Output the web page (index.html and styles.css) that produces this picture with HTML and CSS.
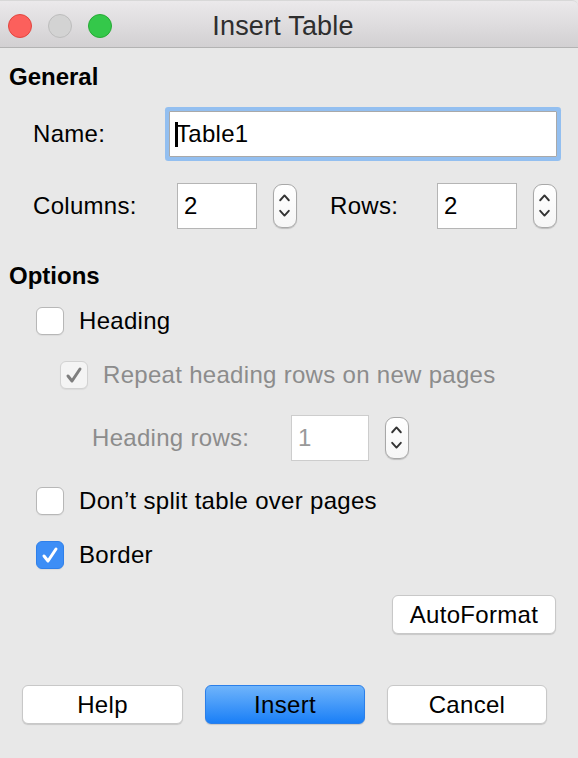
FILE: index.html
```html
<!DOCTYPE html>
<html lang="en">
<head>
    <meta charset="UTF-8">
    <title>Insert Table</title>
    <link rel="stylesheet" href="styles.css">
</head>
<body>
<div class="window">
    <div class="titlebar">
        <div class="lights">
            <span class="light close"></span>
            <span class="light mini"></span>
            <span class="light zoom"></span>
        </div>
        <div class="title">Insert Table</div>
    </div>

    <div class="group-title first">General</div>
    <div class="row name-row">
        <label class="label name-label">Name:</label>
        <div class="text-input focus"><span class="caret"></span>Table1</div>
    </div>
    <div class="row size-row">
        <label class="label cols-label">Columns:</label>
        <div class="num-input">2</div>
        <div class="spin">
            <svg width="24" height="44" viewBox="0 0 24 44"><polyline points="7.5,16 12,11 16.5,16"/><polyline points="7.5,27 12,32 16.5,27"/></svg>
        </div>
        <label class="label rows-label">Rows:</label>
        <div class="num-input">2</div>
        <div class="spin">
            <svg width="24" height="44" viewBox="0 0 24 44"><polyline points="7.5,16 12,11 16.5,16"/><polyline points="7.5,27 12,32 16.5,27"/></svg>
        </div>
    </div>

    <div class="group-title options">Options</div>
    <div class="check-row first-check">
        <span class="box"></span>Heading
    </div>
    <div class="check-row sub disabled">
        <span class="box">
            <svg width="26" height="26" viewBox="0 0 26 26"><polyline points="7,14 11,19 19,7"/></svg>
        </span>Repeat heading rows on new pages
    </div>
    <div class="row hrows-row disabled">
        <label class="label hrows-label">Heading rows:</label>
        <div class="num-input hrows-input">1</div>
        <div class="spin small">
            <svg width="24" height="42" viewBox="0 0 24 42"><polyline points="7.5,15 12,10 16.5,15"/><polyline points="7.5,26 12,31 16.5,26"/></svg>
        </div>
    </div>
    <div class="check-row">
        <span class="box"></span>Don’t split table over pages
    </div>
    <div class="check-row">
        <span class="box checked">
            <svg width="26" height="26" viewBox="0 0 26 26"><polyline points="7,14 11,19 19,7"/></svg>
        </span>Border
    </div>

    <div class="auto-row">
        <div class="btn auto">AutoFormat</div>
    </div>
    <div class="buttons">
        <div class="btn">Help</div>
        <div class="btn primary">Insert</div>
        <div class="btn">Cancel</div>
    </div>
</div>
</body>
</html>
```

FILE: styles.css
```css
*{
    box-sizing: border-box;
}
body{
    margin: 0;
    background: #e8e8e8;
    font-family: "Liberation Sans", Arial, sans-serif;
    font-size: 24px;
    line-height: 28px;
    letter-spacing: 0.3px;
    color: #000;
}
.window{
    width: 578px;
    height: 758px;
    overflow: hidden;
}
/* 标题栏 */
.titlebar{
    height: 48px;
    display: flex;
    align-items: center;
    padding: 4px 0 0 8px;
    background: linear-gradient(#ebe9eb, #d2d0d2);
    border-top: 1px solid #d8d8d8;
    border-bottom: 1px solid #b3b3b3;
    border-top-right-radius: 6px;
}
.lights{
    display: flex;
    gap: 16px;
}
.light{
    width: 24px;
    height: 24px;
    border-radius: 50%;
}
.close{
    background: #fc605c;
    border: 1px solid #e2463f;
}
.mini{
    background: #d3d3d3;
    border: 1px solid #bdbdbd;
}
.zoom{
    background: #34c84a;
    border: 1px solid #27aa35;
}
.title{
    flex: 1;
    text-align: center;
    padding-right: 124px;
    font-size: 27px;
    letter-spacing: 0.2px;
    color: #2e2e2e;
}
/* 分组标题 */
.group-title{
    height: 28px;
    margin-left: 9px;
    font-weight: bold;
    letter-spacing: 0;
}
.group-title.first{
    margin-top: 15px;
}
.group-title.options{
    margin-top: 33px;
}
.row{
    display: flex;
    align-items: center;
    height: 46px;
    padding-left: 33px;
}
.name-row{
    margin-top: 20px;
}
.size-row{
    margin-top: 26px;
}
.name-label{
    width: 136px;
}
.cols-label{
    width: 144px;
}
.rows-label{
    width: 107px;
    margin-left: 33px;
}
.text-input{
    width: 388px;
    height: 46px;
    background: #fff;
    border: 1px solid #a9a9a9;
    border-radius: 1px;
    padding-left: 5px;
    line-height: 44px;
}
.text-input.focus{
    box-shadow: 0 0 0 4px #93bff0;
}
.caret{
    display: inline-block;
    width: 3px;
    height: 25px;
    background: #000;
    vertical-align: -5px;
    margin-right: -2px;
}
.num-input{
    width: 80px;
    height: 46px;
    background: #fff;
    border: 1px solid #b5b5b5;
    padding-left: 6px;
    line-height: 44px;
}
.spin{
    width: 24px;
    height: 44px;
    margin-left: 16px;
    background: linear-gradient(#fff, #f6f6f6);
    border: 1px solid #a8a8a8;
    border-radius: 9px;
    box-shadow: 0 1px 1px rgba(0,0,0,.18);
    display: flex;
}
.spin svg{
    margin-left: -1px;
    margin-top: -1px;
}
.spin polyline{
    fill: none;
    stroke: #333;
    stroke-width: 2;
    stroke-linecap: round;
    stroke-linejoin: round;
}
.spin.small{
    height: 42px;
}
/* 复选框 */
.check-row{
    display: flex;
    align-items: center;
    height: 28px;
    margin-top: 26px;
    padding-left: 36px;
}
.check-row.first-check{
    margin-top: 17px;
}
.check-row.sub{
    padding-left: 60px;
}
.box{
    width: 28px;
    height: 28px;
    margin-right: 15px;
    background: #fff;
    border: 1px solid #b7b7b7;
    border-radius: 6px;
    box-shadow: 0 1px 1px rgba(0,0,0,.06);
    display: flex;
}
.box polyline{
    fill: none;
    stroke: #fff;
    stroke-width: 3;
    stroke-linecap: round;
    stroke-linejoin: round;
}
.box.checked{
    background: #3d8ef6;
    border-color: #2f80ea;
}
.disabled{
    color: #8c8c8c;
}
.disabled .box{
    background: #f4f4f4;
    border-color: #d2d2d2;
}
.disabled .box polyline{
    stroke: #7e7e7e;
}
.hrows-row{
    margin-top: 26px;
    padding-left: 92px;
}
.hrows-label{
    width: 199px;
}
.hrows-input{
    width: 78px;
    border-color: #cdcdcd;
    color: #999;
}
/* 按钮 */
.btn{
    height: 39px;
    background: #fff;
    border: 1px solid #c8c8c8;
    border-radius: 6px;
    box-shadow: 0 1px 1px rgba(0,0,0,.14);
    text-align: center;
    line-height: 37px;
}
.auto-row{
    display: flex;
    justify-content: flex-end;
    margin-top: 26px;
    padding-right: 22px;
}
.btn.auto{
    width: 164px;
}
.buttons{
    display: flex;
    gap: 22px;
    margin-top: 51px;
    padding-left: 22px;
}
.buttons .btn{
    width: 160px;
}
.buttons .btn:first-child{
    width: 161px;
}
.btn.primary{
    background: linear-gradient(#6fb4fb, #1a7ff7);
    border-color: #2b7fe9;
}
```
